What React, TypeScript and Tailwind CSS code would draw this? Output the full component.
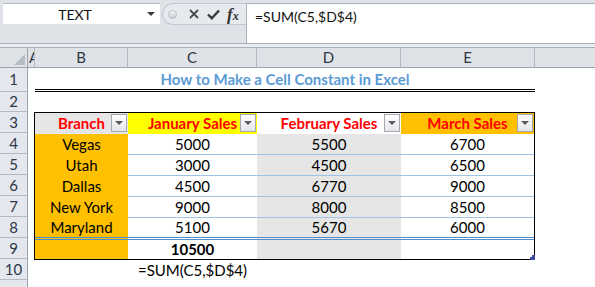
import React from "react";

const sales = [
  ["Vegas", "5000", "5500", "6700"],
  ["Utah", "3000", "4500", "6500"],
  ["Dallas", "4500", "6770", "9000"],
  ["New York", "9000", "8000", "8500"],
  ["Maryland", "5100", "5670", "6000"],
];

const rowHeights = ["h-[24px]", "h-[20px]", "h-[21px]", "h-[21px]", "h-[21px]", "h-[21px]", "h-[21px]", "h-[21px]", "h-[21px]", "h-[21px]"];

function FilterButton() {
  return (
    <span className="absolute right-[1px] top-[1px] flex h-[18px] w-[16px] items-center justify-center border border-[#a3a8b0] bg-gradient-to-b from-white to-[#e4e5e8]">
      <span className="h-0 w-0 border-x-[4px] border-t-[4px] border-x-transparent border-t-[#5a5a5a]" />
    </span>
  );
}

function HeaderCell({ label, bg }: { label: string; bg: string }) {
  return (
    <div className={`relative flex items-center justify-center text-[15px] font-bold text-[#ff0000] ${bg}`}>
      {label}
      <FilterButton />
    </div>
  );
}

export default function App() {
  return (
    <div className="h-[287px] w-[595px] overflow-hidden bg-white font-['Lato',sans-serif] text-black">
      {/* Formula bar */}
      <div className="flex h-[44px] border-b border-[#a9b1bc] bg-[#dfe3e8] pt-[3px]">
        <div className="ml-[3px] flex h-[21px] w-[157px] items-center border-t border-[#b6bdc7] bg-white">
          <span className="flex-1 text-center text-[14px] text-[#111]">TEXT</span>
          <span className="mr-[5px] h-0 w-0 border-x-[4px] border-t-[4px] border-x-transparent border-t-[#3d3d3d]" />
        </div>
        <div className="ml-[2px] flex h-[22px] w-[84px] items-center rounded-l-full border border-r-0 border-[#c3c9d1] bg-[#e6e9ed] pl-[5px]">
          <span className="h-[9px] w-[9px] rounded-full border border-[#b9bec6] bg-gradient-to-b from-[#f4f5f7] to-[#c9ced5]" />
          <svg className="ml-[12px]" width="10" height="10" viewBox="0 0 10 10">
            <path d="M1 1 L9 9 M9 1 L1 9" stroke="#4a4a4a" strokeWidth="1.8" fill="none" />
          </svg>
          <svg className="ml-[8px]" width="13" height="11" viewBox="0 0 13 11">
            <path d="M1 5.5 L4.8 9.2 L12 1.5" stroke="#3a3a3a" strokeWidth="2.4" fill="none" />
          </svg>
          <span className="ml-[7px] font-['Liberation_Serif',serif] text-[17px] font-bold italic leading-none text-[#333]">
            f<span className="text-[12px]">x</span>
          </span>
        </div>
        <div className="flex-1 border-l border-t border-[#a9b1bc] bg-white pl-[8px] pt-[2px] text-[14px] text-[#111]">
          =SUM(C5,$D$4)
        </div>
      </div>
      <div className="h-[4px] border-b border-[#a9b1bc] bg-[#e9ecf0]" />

      {/* Sheet */}
      <div className="flex h-[239px]">
        {/* Row headers */}
        <div className="flex w-[28px] flex-col border-r border-[#9aa3ae] bg-[#e4e8ee] text-[15px] text-[#2d3745]">
          <div className="flex h-[20px] items-end justify-end border-b border-[#9aa3ae] bg-[#dfe3e8] pb-[2px] pr-[2px]">
            <span className="h-0 w-0 border-b-[11px] border-l-[11px] border-b-[#b7bdc5] border-l-transparent" />
          </div>
          {rowHeights.map((h, i) => (
            <div key={i} className={`flex items-center justify-center border-b border-[#b3bac4] ${h}`}>
              {i + 1}
            </div>
          ))}
          <div className="flex-1" />
        </div>

        {/* Cells */}
        <div className="flex flex-1 flex-col">
          <div className="flex h-[20px] border-b border-[#9aa3ae] bg-[#dfe3e8] text-[15px] text-[#2d3745]">
            <div className="w-[7px] overflow-hidden border-r border-[#b3bac4] pl-[1px] leading-[19px]">A</div>
            <div className="flex w-[93px] items-center justify-center border-r border-[#b3bac4]">B</div>
            <div className="flex w-[129px] items-center justify-center border-r border-[#b3bac4]">C</div>
            <div className="flex w-[144px] items-center justify-center border-r border-[#b3bac4]">D</div>
            <div className="flex w-[134px] items-center justify-center border-r border-[#b3bac4]">E</div>
            <div className="flex-1" />
          </div>

          {/* Row 1: title */}
          <div className="ml-[7px] flex h-[24px] w-[500px] items-center justify-center border-b-[3px] border-double border-black pt-[1px] text-[15px] font-bold text-[#5b9bd5]">
            How to Make a Cell Constant in Excel
          </div>
          {/* Row 2 */}
          <div className="h-[20px]" />

          {/* Table rows 3-9 */}
          <div className="relative ml-[6px] grid h-[148px] w-[501px] grid-cols-[93px_129px_144px_1fr] grid-rows-[21px_21px_21px_21px_21px_22px_19px] border border-black text-[15px]">
            <HeaderCell label="Branch" bg="bg-[#e7e6e6]" />
            <HeaderCell label="January Sales" bg="bg-[#ffff00]" />
            <HeaderCell label="February Sales" bg="bg-white" />
            <HeaderCell label="March Sales" bg="bg-[#ffc000]" />

            {sales.map((r, i) => {
              const last = i === sales.length - 1;
              const line = last
                ? "border-b-[3px] border-double border-[#4f8fcc]"
                : "border-b border-[#9dc3e6]";
              const lineB = last ? "border-b-[3px] border-double border-[#4f8fcc]" : "border-b border-[#ffc000]";
              return (
                <React.Fragment key={r[0]}>
                  <div className={`flex items-center justify-center bg-[#ffc000] ${lineB}`}>{r[0]}</div>
                  <div className={`flex items-center justify-center bg-white ${line}`}>{r[1]}</div>
                  <div className={`flex items-center justify-center bg-[#e7e6e6] ${line}`}>{r[2]}</div>
                  <div className={`flex items-center justify-center bg-white ${line}`}>{r[3]}</div>
                </React.Fragment>
              );
            })}

            <div className="bg-[#ffc000]" />
            <div className="flex items-center justify-center bg-white font-bold">10500</div>
            <div className="bg-[#e7e6e6]" />
            <div className="bg-white" />
            <span className="absolute -bottom-[1px] -right-[1px] h-[5px] w-[5px] bg-[#3c4aa0] [clip-path:polygon(100%_0,100%_100%,0_100%,0_40%,40%_40%,40%_0)]" />
          </div>

          {/* Row 10 */}
          <div className="flex h-[21px]">
            <div className="w-[100px]" />
            <div className="flex w-[129px] items-center justify-center text-[15px]">=SUM(C5,$D$4)</div>
          </div>
        </div>
      </div>
    </div>
  );
}
